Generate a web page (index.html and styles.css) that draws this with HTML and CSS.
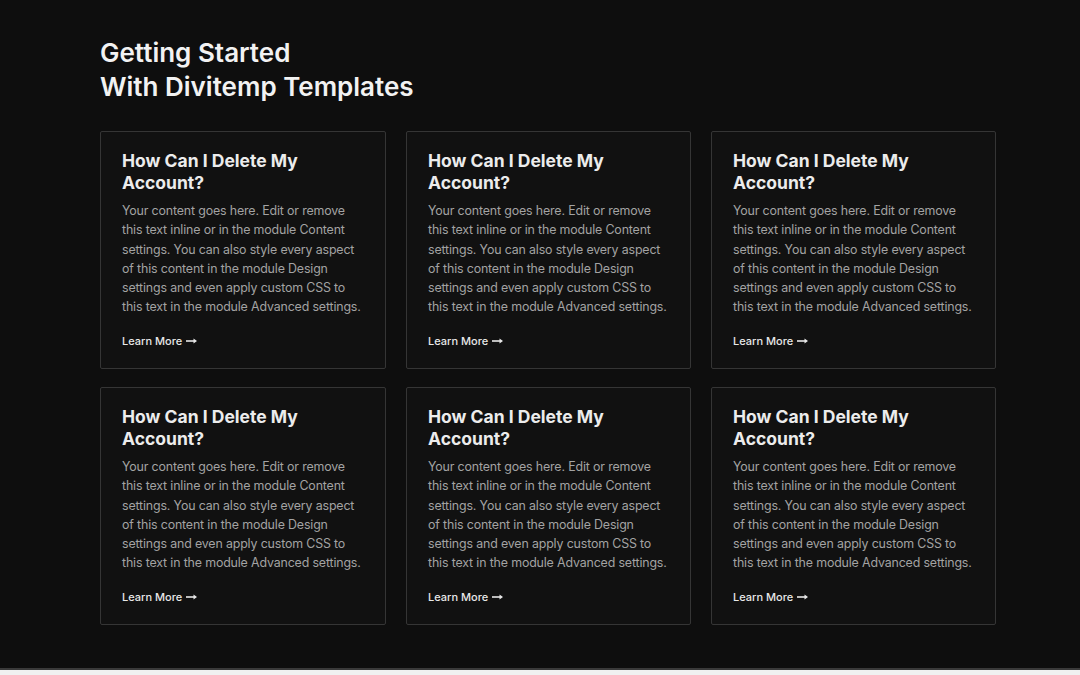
FILE: index.html
```html
<!DOCTYPE html>
<html lang="en">
<head>
    <meta charset="UTF-8">
    <meta name="viewport" content="width=device-width, initial-scale=1.0">
    <title>Getting Started With Divitemp Templates</title>
    <link rel="stylesheet" href="styles.css">
</head>
<body>
    <section class="faq">
        <h1>Getting Started<br>With Divitemp Templates</h1>
        <div class="faq-grid">
            <div class="faq-card">
                <h2>How Can I Delete My Account?</h2>
                <p>Your content goes here. Edit or remove this text inline or in the module Content settings. You can also style every aspect of this content in the module Design settings and even apply custom CSS to this text in the module Advanced settings.</p>
                <a href="#" class="learn-more">Learn More <svg class="arrow" width="11" height="6" viewBox="0 0 11 6"><path d="M0 3h8.5" stroke="#e8e8e8" stroke-width="1.6"/><path d="M7.5 0.5L11 3L7.5 5.5z" fill="#e8e8e8"/></svg></a>
            </div>
            <div class="faq-card">
                <h2>How Can I Delete My Account?</h2>
                <p>Your content goes here. Edit or remove this text inline or in the module Content settings. You can also style every aspect of this content in the module Design settings and even apply custom CSS to this text in the module Advanced settings.</p>
                <a href="#" class="learn-more">Learn More <svg class="arrow" width="11" height="6" viewBox="0 0 11 6"><path d="M0 3h8.5" stroke="#e8e8e8" stroke-width="1.6"/><path d="M7.5 0.5L11 3L7.5 5.5z" fill="#e8e8e8"/></svg></a>
            </div>
            <div class="faq-card">
                <h2>How Can I Delete My Account?</h2>
                <p>Your content goes here. Edit or remove this text inline or in the module Content settings. You can also style every aspect of this content in the module Design settings and even apply custom CSS to this text in the module Advanced settings.</p>
                <a href="#" class="learn-more">Learn More <svg class="arrow" width="11" height="6" viewBox="0 0 11 6"><path d="M0 3h8.5" stroke="#e8e8e8" stroke-width="1.6"/><path d="M7.5 0.5L11 3L7.5 5.5z" fill="#e8e8e8"/></svg></a>
            </div>
            <div class="faq-card">
                <h2>How Can I Delete My Account?</h2>
                <p>Your content goes here. Edit or remove this text inline or in the module Content settings. You can also style every aspect of this content in the module Design settings and even apply custom CSS to this text in the module Advanced settings.</p>
                <a href="#" class="learn-more">Learn More <svg class="arrow" width="11" height="6" viewBox="0 0 11 6"><path d="M0 3h8.5" stroke="#e8e8e8" stroke-width="1.6"/><path d="M7.5 0.5L11 3L7.5 5.5z" fill="#e8e8e8"/></svg></a>
            </div>
            <div class="faq-card">
                <h2>How Can I Delete My Account?</h2>
                <p>Your content goes here. Edit or remove this text inline or in the module Content settings. You can also style every aspect of this content in the module Design settings and even apply custom CSS to this text in the module Advanced settings.</p>
                <a href="#" class="learn-more">Learn More <svg class="arrow" width="11" height="6" viewBox="0 0 11 6"><path d="M0 3h8.5" stroke="#e8e8e8" stroke-width="1.6"/><path d="M7.5 0.5L11 3L7.5 5.5z" fill="#e8e8e8"/></svg></a>
            </div>
            <div class="faq-card">
                <h2>How Can I Delete My Account?</h2>
                <p>Your content goes here. Edit or remove this text inline or in the module Content settings. You can also style every aspect of this content in the module Design settings and even apply custom CSS to this text in the module Advanced settings.</p>
                <a href="#" class="learn-more">Learn More <svg class="arrow" width="11" height="6" viewBox="0 0 11 6"><path d="M0 3h8.5" stroke="#e8e8e8" stroke-width="1.6"/><path d="M7.5 0.5L11 3L7.5 5.5z" fill="#e8e8e8"/></svg></a>
            </div>
        </div>
    </section>
    <div class="bottom-strip"></div>
</body>
</html>
```

FILE: styles.css
```css
body {
    margin: 0;
    padding: 0;
    background-color: #f0f0f0;
    font-family: Inter, "Noto Sans", sans-serif;
}
.faq {
    background-color: #0e0e0e;
    height: 632px;
    padding: 36px 0 0 100px;
    border-bottom: 2px solid #3a3a3a;
}
.faq h1 {
    margin: 0 0 27px;
    color: #f2f2f2;
    font-size: 26px;
    font-weight: 600;
    line-height: 34px;
    letter-spacing: 0;
}
.faq-grid {
    width: 896px;
    display: grid;
    grid-template-columns: 286px 285px 285px;
    column-gap: 20px;
    row-gap: 18px;
}
.faq-card {
    box-sizing: border-box;
    height: 238px;
    padding: 18px 16px 20px 21px;
    background-color: #111111;
    border: 1px solid #353535;
    border-radius: 2px;
}
.faq-card h2 {
    margin: 0;
    color: #ececec;
    font-size: 17.5px;
    font-weight: 700;
    line-height: 22px;
    max-width: 200px;
}
.faq-card p {
    max-width: 242px;
    margin: 7px 0 0;
    color: #a3a3a3;
    font-size: 12.4px;
    line-height: 19.3px;
    letter-spacing: -0.15px;
}
.learn-more {
    display: inline-block;
    margin-top: 16px;
    color: #e8e8e8;
    font-size: 11px;
    font-weight: 500;
    line-height: 16px;
    text-decoration: none;
    letter-spacing: 0;
}
.arrow {
    margin-left: 1px;
    vertical-align: 1px;
}
```
